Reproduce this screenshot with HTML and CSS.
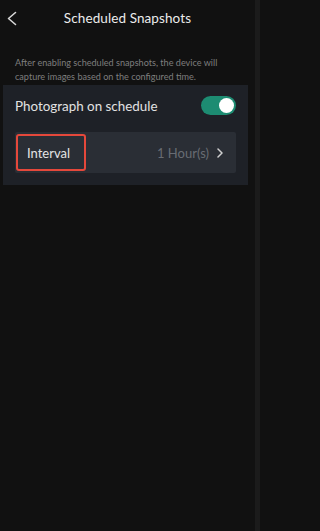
FILE: index.html
```html
<!DOCTYPE html>
<html lang="en">
<head>
<meta charset="utf-8">
<title>Scheduled Snapshots</title>
<link rel="stylesheet" href="styles.css">
</head>
<body>
<div class="screen">
  <main class="page">
    <header class="nav">
      <button class="back" aria-label="Back">
        <svg width="12" height="15" viewBox="0 0 12 15"><path d="M9.5 1.5 L2.5 7.5 L9.5 13.5" fill="none" stroke="#d8d8d8" stroke-width="1.6" stroke-linecap="round" stroke-linejoin="round"/></svg>
      </button>
      <h1 class="title">Scheduled Snapshots</h1>
    </header>
    <p class="desc">After enabling scheduled snapshots, the device will capture images based on the configured time.</p>
    <section class="card">
      <div class="switch-row">
        <span class="label">Photograph on schedule</span>
        <span class="toggle on"><span class="knob"></span></span>
      </div>
      <div class="interval-row">
        <span class="interval-label">Interval</span>
        <span class="value">1 Hour(s)
          <svg class="chev" width="6" height="10" viewBox="0 0 6 10"><path d="M1 1 L5 5 L1 9" fill="none" stroke="#d0d0d0" stroke-width="1.5" stroke-linecap="round" stroke-linejoin="round"/></svg>
        </span>
        <span class="highlight"></span>
      </div>
    </section>
  </main>
  <div class="edge"></div>
</div>
</body>
</html>
```
FILE: styles.css
```css
* { box-sizing: border-box; }
html, body { margin: 0; padding: 0; height: 100%; }
body {
  background: #111111;
  font-family: Lato, "Noto Sans", "Liberation Sans", sans-serif;
  color: #e6e6e6;
}
.screen {
  display: flex;
  width: 260px;
  height: 531px;
}
.page {
  flex: 1;
  min-width: 0;
}
.edge {
  width: 5px;
  background: #1b1b1b;
}
.nav {
  position: relative;
  height: 36px;
  display: flex;
  align-items: center;
  justify-content: center;
}
.back {
  position: absolute;
  left: 3px;
  top: 11px;
  background: none;
  border: 0;
  padding: 0 3px;
  height: 15px;
  line-height: 0;
}
.title {
  margin: 0;
  font-size: 13.5px;
  font-weight: 400;
  color: #ececec;
  letter-spacing: 0.1px;
}
.desc {
  margin: 20px 0 0;
  padding: 0 12px 0 15px;
  font-size: 9.1px;
  line-height: 14px;
  color: #7e7e7e;
}
.card {
  margin: 1px 7px 0 3px;
  background: #1e2127;
  padding: 0 12px 12px;
  width: 245px;
}
.switch-row {
  height: 47px;
  padding-bottom: 6px;
  display: flex;
  align-items: center;
  justify-content: space-between;
}
.label {
  font-size: 13.4px;
  color: #e2e2e2;
}
.toggle {
  width: 35px;
  height: 19px;
  border-radius: 10px;
  background: #1d8c72;
  display: flex;
  align-items: center;
  justify-content: flex-end;
  padding: 0 2px;
}
.knob {
  width: 15px;
  height: 15px;
  border-radius: 50%;
  background: #ffffff;
}
.interval-row {
  position: relative;
  height: 41px;
  background: #2a2e35;
  border-radius: 2px;
  display: flex;
  align-items: center;
  justify-content: space-between;
  padding: 0 13px 0 12px;
}
.interval-label {
  font-size: 13px;
  color: #e4e4e4;
}
.value {
  font-size: 13px;
  color: #686c73;
  display: flex;
  align-items: center;
  gap: 8px;
}
.highlight {
  position: absolute;
  left: 1px;
  top: 2px;
  width: 70px;
  height: 37px;
  border: 2px solid #e5483b;
  border-radius: 3px;
}
```
